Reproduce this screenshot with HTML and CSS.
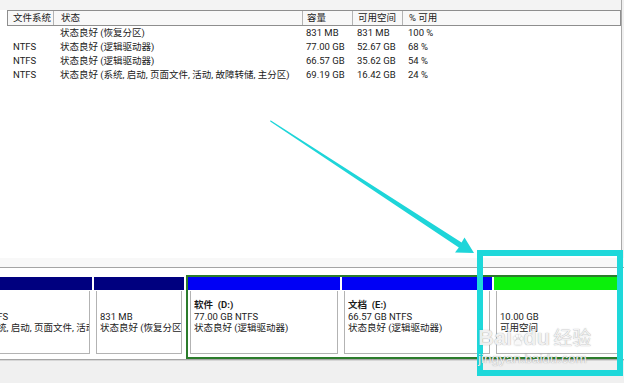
FILE: index.html
```html
<!DOCTYPE html>
<html lang="zh-CN">
<head>
<meta charset="utf-8">
<title>磁盘管理</title>
<link rel="stylesheet" href="styles.css">
</head>
<body>
<div class="page">
  <section class="list">
    <div class="topband"></div>
    <div class="hdr">
      <div class="c c1">文件系统</div>
      <div class="c c2">状态</div>
      <div class="c c3">容量</div>
      <div class="c c4">可用空间</div>
      <div class="c c5">% 可用</div>
    </div>
    <div class="row">
      <div class="c c1"></div>
      <div class="c c2">状态良好 (恢复分区)</div>
      <div class="c c3">831 MB</div>
      <div class="c c4">831 MB</div>
      <div class="c c5">100 %</div>
    </div>
    <div class="row">
      <div class="c c1">NTFS</div>
      <div class="c c2">状态良好 (逻辑驱动器)</div>
      <div class="c c3">77.00 GB</div>
      <div class="c c4">52.67 GB</div>
      <div class="c c5">68 %</div>
    </div>
    <div class="row">
      <div class="c c1">NTFS</div>
      <div class="c c2">状态良好 (逻辑驱动器)</div>
      <div class="c c3">66.57 GB</div>
      <div class="c c4">35.62 GB</div>
      <div class="c c5">54 %</div>
    </div>
    <div class="row">
      <div class="c c1">NTFS</div>
      <div class="c c2">状态良好 (系统, 启动, 页面文件, 活动, 故障转储, 主分区)</div>
      <div class="c c3">69.19 GB</div>
      <div class="c c4">16.42 GB</div>
      <div class="c c5">24 %</div>
    </div>
  </section>

  <section class="disk">
    <div class="disk-top"></div>
    <div class="parts-wrap">
      <div class="parts">
        <div class="part p1">
          <div class="bar navy"></div>
          <div class="body">
            <div class="ln b">(C:)</div>
            <div class="ln">69.19 GB NTFS</div>
            <div class="ln">状态良好 (系统, 启动, 页面文件, 活动, 故障转储, 主分区)</div>
          </div>
        </div>
        <div class="part p2">
          <div class="bar navy"></div>
          <div class="body">
            <div class="ln"></div>
            <div class="ln">831 MB</div>
            <div class="ln">状态良好 (恢复分区)</div>
          </div>
        </div>
        <div class="ext">
          <div class="part p3">
            <div class="bar blue"></div>
            <div class="body">
              <div class="ln b">软件&nbsp;&nbsp;(D:)</div>
              <div class="ln">77.00 GB NTFS</div>
              <div class="ln">状态良好 (逻辑驱动器)</div>
            </div>
          </div>
          <div class="part p4">
            <div class="bar blue"></div>
            <div class="body">
              <div class="ln b">文档&nbsp;&nbsp;(E:)</div>
              <div class="ln">66.57 GB NTFS</div>
              <div class="ln">状态良好 (逻辑驱动器)</div>
            </div>
          </div>
          <div class="part p5">
            <div class="bar green"></div>
            <div class="body">
              <div class="ln"></div>
              <div class="ln">10.00 GB</div>
              <div class="ln">可用空间</div>
            </div>
          </div>
        </div>
      </div>
    </div>
    <div class="disk-bottom"></div>
  </section>

  <svg class="arrow" width="624" height="383" viewBox="0 0 624 383">
    <polygon points="270.5,120.3 461.6,242.6 464.5,237.5 474,253 455,252.5 458.8,247.4 270.2,121.4" fill="#1ed5d9"/>
  </svg>
  <div class="highlight"></div>
  <div class="watermark">
    <div class="wm-top">
      <span class="wm-bai">Bai</span>
      <svg class="paw" width="10" height="12" viewBox="0 0 16 18">
        <ellipse cx="3" cy="6" rx="2" ry="2.6" />
        <ellipse cx="6.5" cy="2.8" rx="2" ry="2.6" />
        <ellipse cx="10.5" cy="2.8" rx="2" ry="2.6" />
        <ellipse cx="13.5" cy="6.5" rx="2" ry="2.6" />
        <path d="M8 8 C5 8 2.5 12 2.5 14.5 C2.5 17 5 17 8 16.5 C11 17 13.5 17 13.5 14.5 C13.5 12 11 8 8 8 Z" />
      </svg>
      <span class="wm-du">du</span>
      <span class="wm-jy">经验</span>
    </div>
    <div class="wm-url">jingyan.baidu.com</div>
  </div>
</div>
</body>
</html>
```
FILE: styles.css
```css
* { box-sizing: border-box; }
html, body { margin: 0; padding: 0; }
body {
  width: 624px;
  height: 383px;
  overflow: hidden;
  background: #f0f0f0;
  font-family: Roboto, "Noto Sans CJK SC", sans-serif;
  font-size: 9.5px;
  color: #1b1b1b;
}
.page { position: relative; width: 624px; height: 383px; }

/* ---- top list ---- */
.list {
  height: 258px;
  background: #fff;
  border-right: 1px solid #a9a9a9;
  margin-right: 2px;
}
.topband { height: 10px; background: #f3f3f3; }
.hdr {
  display: flex;
  margin-left: 7px;
  height: 16px;
  border: 1px solid #8e8e8e;
  background: #f8f8f8;
}
.hdr .c { border-right: 1px solid #b4b4b4; line-height: 14px; }
.hdr .c5 { border-right: none; }
.row { display: flex; margin-left: 7px; height: 14px; line-height: 14px; }
.c { white-space: nowrap; overflow: hidden; }
.c1 { width: 46px; padding-left: 5px; }
.c2 { width: 249px; padding-left: 7px; }
.c3 { width: 50px; padding-left: 4px; }
.c4 { width: 50px; padding-left: 5px; }
.c5 { flex: 1; padding-left: 6px; }
.row .c1 { padding-left: 6px; }

/* ---- disk map ---- */
.disk { height: 125px; }
.disk-top {
  height: 10px;
  background: #f8f8f8;
  border-bottom: 1px solid #a4a4a4;
}
.parts-wrap {
  background: #fff;
  padding-top: 7px;
  overflow: hidden;
  border-bottom: 1px solid #a6a6a6;
}
.parts {
  display: flex;
  gap: 2px;
  margin-left: -62px;
  height: 84px;
}
.part {
  display: flex;
  flex-direction: column;
  background: #fff;
  overflow: hidden;
}
.p1, .p2 { margin-top: 2px; margin-bottom: 2px; }
.p1 { width: 154px; }
.p2 { width: 90px; }
.p3 { width: 152px; }
.p4 { width: 150px; }
.p5 { width: 127px; }
.bar { height: 13px; flex: none; }
.navy { background: #00007f; }
.blue { background: #0000f5; }
.green { background: #0bf00b; }
.body {
  flex: 1;
  margin: 1px 2px 3px 2px;
  border: 1px solid #b3b3b3;
  border-top: none;
  padding: 8px 0 0 3px;
  overflow: hidden;
  background: #fff;
}
.ln { height: 11.5px; line-height: 11.5px; white-space: nowrap; overflow: hidden; }
.b { font-weight: bold; }
.ext {
  display: flex;
  gap: 2px;
  width: 437px;
  border: 2px solid #2c7c2c;
  background: #fff;
}
.disk-bottom { height: 1px; background: #d6d6d6; }

/* ---- overlays ---- */
.arrow { position: absolute; left: 0; top: 0; pointer-events: none; }
.highlight {
  position: absolute;
  left: 477px;
  top: 250px;
  width: 146px;
  height: 126px;
  border: 6px solid #1ed8da;
}
.watermark {
  position: absolute;
  left: 478px;
  top: 326px;
  color: rgba(255,255,255,0.9);
  font-family: "Liberation Sans", "Noto Sans CJK SC", sans-serif;
  text-shadow: 0 0 1.2px rgba(80,80,80,0.45), 0 0 0.5px rgba(80,80,80,0.4);
}
.wm-top { display: flex; align-items: flex-end; height: 24px; }
.wm-bai, .wm-du { font-size: 22px; font-weight: bold; line-height: 24px; }
.paw { fill: rgba(255,255,255,0.9); margin: 0 0 4px 1px; filter: drop-shadow(0 0 0.8px rgba(80,80,80,0.5)); }
.wm-jy { font-size: 19px; line-height: 23px; margin-left: 3px; }
.wm-url { font-size: 13.5px; line-height: 16px; margin-top: 1px; }
```
